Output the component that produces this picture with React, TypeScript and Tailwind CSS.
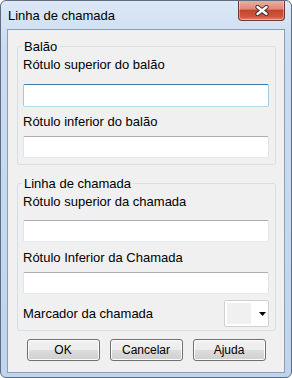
import React from 'react'

function TextBox({ focused = false, h = 22 }: { focused?: boolean; h?: number }) {
  return (
    <input
      type="text"
      className={`block w-full rounded-[2px] border bg-white outline-none ${
        h === 23 ? 'h-[23px]' : 'h-[22px]'
      } ${
        focused
          ? 'border-[#a4c9e3] border-t-[#3d7bad] border-b-[#b7d9ed]'
          : 'border-[#e2e3ea] border-t-[#abadb3] border-b-[#e3e9ef]'
      }`}
    />
  )
}

function Group({ title, children, className = '' }: { title: string; children: React.ReactNode; className?: string }) {
  return (
    <div className={`relative ml-[9px] mr-[8px] rounded-[3px] border border-[#d5dfe5] pl-[5px] pr-[6px] ${className}`}>
      <span className="absolute -top-[8px] left-[4px] bg-[#f0f0f0] px-[2px] leading-[16px]">{title}</span>
      {children}
    </div>
  )
}

function Button({ label }: { label: string }) {
  return (
    <button className="flex h-[22px] w-[73px] items-center justify-center rounded-[3px] border border-[#707070] bg-[linear-gradient(to_bottom,#f2f2f2_0%,#ebebeb_50%,#dddddd_50%,#cfcfcf_100%)] text-[12px] leading-[14px] text-black shadow-[inset_0_0_0_1px_#fcfcfc]">
      {label}
    </button>
  )
}

export default function App() {
  return (
    <div className="relative flex h-[378px] w-[292px] flex-col overflow-hidden rounded-[6px] border border-[#5e6d7f] bg-[linear-gradient(to_bottom,#dce8f6_0%,#cadcf1_12%,#bfd5ed_100%)] font-['Liberation_Sans',Arial,sans-serif] text-[13px] leading-[16px] text-black">
      {/* Title bar */}
      <div className="h-[28px] shrink-0 pl-[7px] pt-[7px]">Linha de chamada</div>
      <div className="absolute -top-[1px] right-[6px] flex h-[21px] w-[47px] items-center justify-center rounded-b-[4px] border border-t-0 border-[#6e3a31] bg-[linear-gradient(to_bottom,#eab3a6_0%,#dc8a76_45%,#c6442b_52%,#cc5a3f_85%,#e28a6d_100%)] shadow-[inset_0_0_0_1px_rgba(255,255,255,0.35)]">
        <svg width="14" height="11" viewBox="0 0 14 11">
          <path d="M2.5 2 L11.5 9 M11.5 2 L2.5 9" stroke="#3b2a28" strokeWidth="4.2" strokeLinecap="round" />
          <path d="M2.5 2 L11.5 9 M11.5 2 L2.5 9" stroke="#ffffff" strokeWidth="2.4" strokeLinecap="round" />
        </svg>
      </div>

      {/* Client area */}
      <div className="mx-[6px] mb-[4px] flex flex-1 flex-col border border-[#8c9db5] bg-[#f0f0f0]">
        <Group title="Balão" className="mt-[16px] pb-[6px] pt-[10px]">
          <div>Rótulo superior do balão</div>
          <div className="mt-[11px]">
            <TextBox focused h={23} />
          </div>
          <div className="mt-[7px]">Rótulo inferior do balão</div>
          <div className="mt-[6px]">
            <TextBox />
          </div>
        </Group>

        <Group title="Linha de chamada" className="mt-[18px] pb-[3px] pt-[10px]">
          <div>Rótulo superior da chamada</div>
          <div className="mt-[10px]">
            <TextBox />
          </div>
          <div className="mt-[8px]">Rótulo Inferior da Chamada</div>
          <div className="mt-[6px]">
            <TextBox />
          </div>
          <div className="mt-[6px] flex items-center justify-between">
            <span>Marcador da chamada</span>
            <div className="flex h-[27px] w-[45px] items-center rounded-[2px] border border-[#d0d0d0] bg-white pl-[2px]">
              <div className="h-[21px] w-[24px] bg-[#f0f0f0]" />
              <svg className="ml-[8px]" width="7" height="4" viewBox="0 0 7 4">
                <path d="M0 0 H7 L3.5 4 Z" fill="#000" />
              </svg>
            </div>
          </div>
        </Group>

        <div className="mt-[8px] flex justify-center gap-[10px]">
          <Button label="OK" />
          <Button label="Cancelar" />
          <Button label="Ajuda" />
        </div>
      </div>
    </div>
  )
}
